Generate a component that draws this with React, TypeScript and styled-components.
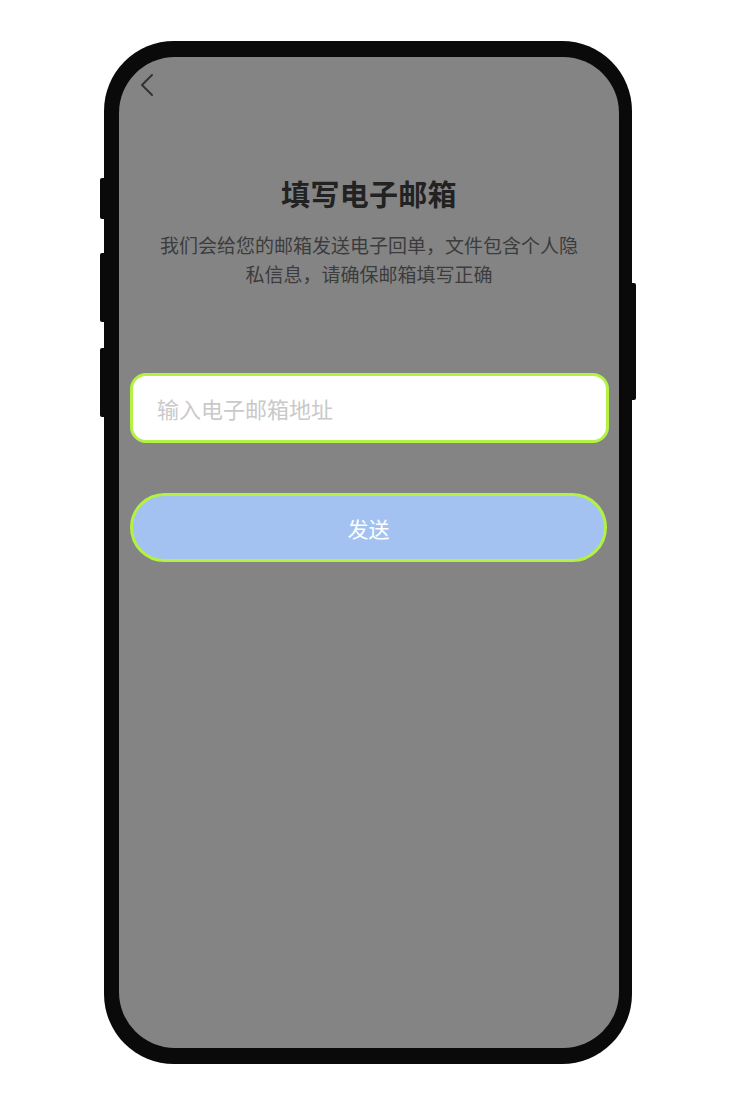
import React from "react";
import styled, { createGlobalStyle } from "styled-components";

const GlobalStyle = createGlobalStyle`
  html, body {
    margin: 0;
    padding: 0;
    background: #ffffff;
    font-family: "Noto Sans CJK SC", "Noto Sans", sans-serif;
  }
  * { box-sizing: border-box; }
`;

const Page = styled.div`
  width: 737px;
  height: 1106px;
  display: flex;
  justify-content: center;
  padding-top: 41px;
  padding-right: 1px;
`;

const Phone = styled.div`
  position: relative;
  width: 528px;
  height: 1023px;
  background: #0a0a0a;
  border-radius: 70px;
  padding: 16px 13px 16px 15px;
`;

const SideButton = styled.div<{ $side: "left" | "right"; $top: number; $height: number }>`
  position: absolute;
  ${(p) => (p.$side === "left" ? "left: -4px;" : "right: -4px;")}
  top: ${(p) => p.$top}px;
  width: 5px;
  height: ${(p) => p.$height}px;
  background: #0a0a0a;
  border-radius: ${(p) => (p.$side === "left" ? "2px 0 0 2px" : "0 2px 2px 0")};
`;

const Screen = styled.div`
  width: 100%;
  height: 100%;
  background: #848484;
  border-radius: 56px;
  overflow: hidden;
  display: flex;
  flex-direction: column;
`;

const NavBar = styled.div`
  height: 56px;
  display: flex;
  align-items: flex-start;
  padding: 16px 0 0 20px;
`;

const BackButton = styled.button`
  border: none;
  background: none;
  padding: 0;
  width: 16px;
  height: 24px;
  display: flex;
  cursor: pointer;
`;

const Title = styled.h1`
  margin: 60px 0 0;
  text-align: center;
  font-size: 29px;
  line-height: 40px;
  font-weight: 700;
  color: #222222;
  letter-spacing: 0.3px;
`;

const Subtitle = styled.p`
  margin: 17px auto 0;
  width: 428px;
  text-align: center;
  font-size: 19px;
  line-height: 29px;
  color: #3c3c3c;
`;

const Form = styled.div`
  margin-top: 85px;
  padding: 0 10px 0 11px;
  display: flex;
  flex-direction: column;
  gap: 50px;
`;

const EmailInput = styled.input`
  width: 100%;
  height: 70px;
  border: 3px solid #b3f142;
  border-radius: 16px;
  background: #ffffff;
  padding: 0 0 0 24px;
  font-family: "Noto Sans CJK SC", "Noto Sans", sans-serif;
  font-size: 22px;
  color: #333;
  outline: none;
  &::placeholder {
    color: #c9c9c9;
  }
`;

const SendButton = styled.button`
  width: calc(100% - 2px);
  height: 69px;
  border: 3px solid #b3f142;
  border-radius: 35px;
  background: #a3c2f2;
  color: #ffffff;
  font-family: "Noto Sans CJK SC", "Noto Sans", sans-serif;
  font-size: 21px;
  cursor: pointer;
`;

export default function App() {
  return (
    <>
      <GlobalStyle />
      <Page>
        <Phone>
          <SideButton $side="left" $top={137} $height={41} />
          <SideButton $side="left" $top={212} $height={69} />
          <SideButton $side="left" $top={307} $height={69} />
          <SideButton $side="right" $top={242} $height={117} />
          <Screen>
            <NavBar>
              <BackButton aria-label="返回">
                <svg width="16" height="24" viewBox="0 0 16 24" fill="none">
                  <path d="M13 2 L3 12 L13 22" stroke="#333" strokeWidth="2" strokeLinecap="round" strokeLinejoin="round" />
                </svg>
              </BackButton>
            </NavBar>
            <Title>填写电子邮箱</Title>
            <Subtitle>我们会给您的邮箱发送电子回单，文件包含个人隐私信息，请确保邮箱填写正确</Subtitle>
            <Form>
              <EmailInput placeholder="输入电子邮箱地址" />
              <SendButton>发送</SendButton>
            </Form>
          </Screen>
        </Phone>
      </Page>
    </>
  );
}
